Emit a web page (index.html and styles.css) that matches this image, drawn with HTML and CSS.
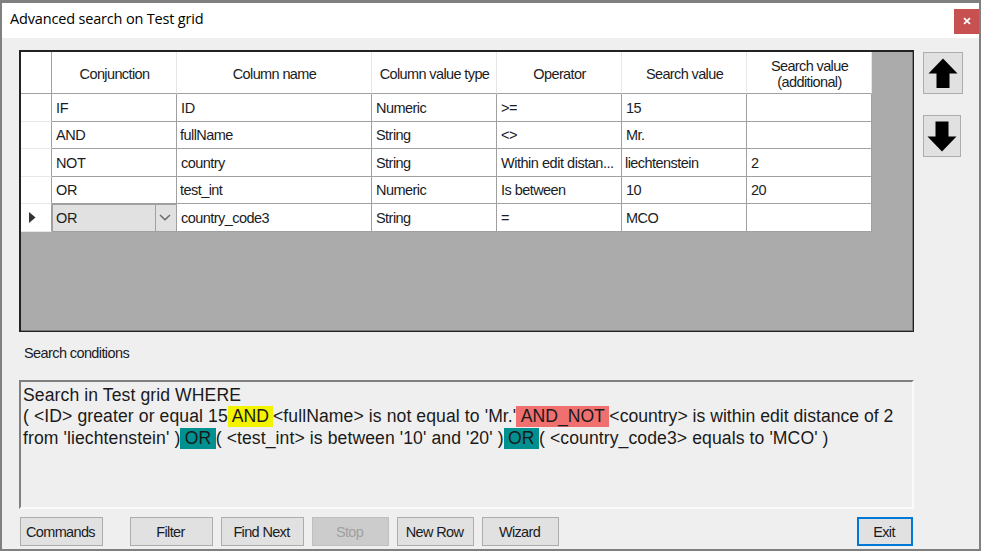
FILE: index.html
```html
<!DOCTYPE html>
<html lang="en">
<head>
<meta charset="utf-8">
<title>Advanced search on Test grid</title>
<link rel="stylesheet" href="styles.css">
</head>
<body>
<div class="window">
  <header class="titlebar">
    <span class="title">Advanced search on Test grid</span>
    <button class="close" aria-label="Close"><svg width="8" height="8" viewBox="0 0 8 8"><path d="M1 1.2L7 6.8M7 1.2L1 6.8" stroke="#fff" stroke-width="1.8"/></svg></button>
  </header>
  <main class="content">
    <section class="top">
      <div class="grid-box">
        <div class="grid">
          <div class="h"></div><div class="h">Conjunction</div><div class="h">Column name</div><div class="h">Column value type</div><div class="h">Operator</div><div class="h">Search value</div><div class="h">Search value<br>(additional)</div>
          <div class="r"></div><div class="c up">IF</div><div class="c up">ID</div><div class="c">Numeric</div><div class="c">&gt;=</div><div class="c">15</div><div class="c"></div>
          <div class="r"></div><div class="c up">AND</div><div class="c name">fullName</div><div class="c">String</div><div class="c">&lt;&gt;</div><div class="c">Mr.</div><div class="c"></div>
          <div class="r"></div><div class="c up">NOT</div><div class="c">country</div><div class="c">String</div><div class="c dots">Within edit distan...</div><div class="c flush">liechtenstein</div><div class="c">2</div>
          <div class="r"></div><div class="c up">OR</div><div class="c name">test_int</div><div class="c">Numeric</div><div class="c">Is between</div><div class="c">10</div><div class="c">20</div>
          <div class="r"><svg width="7" height="11" viewBox="0 0 7 11"><path d="M0 0L6.5 5.5L0 11Z" fill="#333"/></svg></div>
          <div class="c up combo"><span>OR</span><i class="drop"><svg width="12" height="7" viewBox="0 0 12 7"><path d="M1 1L6 5.8L11 1" fill="none" stroke="#666" stroke-width="1.4"/></svg></i></div>
          <div class="c">country_code3</div><div class="c">String</div><div class="c">=</div><div class="c">MCO</div><div class="c"></div>
        </div>
      </div>
      <div class="movers">
        <button class="move up-btn" aria-label="Move up"><svg width="30" height="31" viewBox="0 0 30 31"><path d="M15 0.5L29.5 15.5H21.5V30H8.500V15.500H0.500Z"/></svg></button>
        <button class="move down-btn" aria-label="Move down"><svg width="30" height="31" viewBox="0 0 30 31"><path d="M15 30.500L0.500 15.500H8.500V0.500H21.500V15.500H29.500Z"/></svg></button>
      </div>
    </section>
    <div class="label">Search conditions</div>
    <section class="conditions">
      <p>Search in Test grid WHERE</p>
      <p>( &lt;ID&gt; greater or equal 15<mark class="and">AND</mark>&lt;fullName&gt; is not equal to 'Mr.'<mark class="not">AND_NOT</mark><span class="tail">&lt;country&gt; is within edit distance of 2</span></p>
      <p>from 'liechtenstein' )<mark class="or">OR</mark>( &lt;test_int&gt; is between '10' and '20' )<mark class="or">OR</mark>( &lt;country_code3&gt; equals to 'MCO' )</p>
    </section>
    <footer class="actions">
      <button class="btn commands">Commands</button>
      <button class="btn">Filter</button>
      <button class="btn">Find Next</button>
      <button class="btn small stop" disabled>Stop</button>
      <button class="btn small">New Row</button>
      <button class="btn small">Wizard</button>
      <button class="btn exit">Exit</button>
    </footer>
  </main>
</div>
</body>
</html>
```
FILE: styles.css
```css
* { box-sizing: border-box; }
html, body { margin: 0; height: 100%; overflow: hidden; }
body { font: 14.5px/17px "Liberation Sans", Arial, sans-serif; letter-spacing: -0.55px; color: #1c1c24; }
button { font: inherit; letter-spacing: inherit; color: inherit; padding: 0; margin: 0; border-radius: 0; }
.window { width: 981px; height: 551px; border: 2px solid #808080; border-top-width: 3px; background: #efefef; display: flex; flex-direction: column; }
.titlebar { height: 35px; background: #fff; display: flex; justify-content: space-between; padding-left: 8px; flex: none; }
.title { font: 14.5px/32px "Open Sans", "Noto Sans", sans-serif; letter-spacing: -0.17px; color: #000; }
.close { width: 25px; height: 25px; margin-top: 6px; border: 0; background: #c75050; display: flex; align-items: center; justify-content: center; }
.close svg { margin: -1px 0 0 0; }
.content { flex: 1; display: flex; flex-direction: column; padding: 12px 0 0 17px; }
.top { display: flex; height: 282px; gap: 9px; }
.grid-box { width: 895px; height: 282px; background: #ababab; border: 1px solid #222; border-width: 2px 1px 1px 2px; box-shadow: inset -1px -1px #777; flex: none; }
.grid { display: grid; width: 851px; grid-template-columns: 31px 125px 195px 125px 125px 125px 125px; grid-template-rows: 42px repeat(5, 27.5px); background: #fff; }
.h { display: flex; align-items: center; justify-content: center; text-align: center; border-right: 1px solid #e6e6e6; border-bottom: 1px solid #a0a0a0; padding: 2px 0 0 1px; line-height: 16px; letter-spacing: -0.62px; }
.h:first-child { border-right-color: #a0a0a0; }
.r, .c { border-bottom: 1px solid #a0a0a0; border-right: 1px solid #a0a0a0; display: flex; align-items: center; }
.r { border-bottom-color: #e8e8e8; padding-left: 8px; }
.c { padding-left: 4px; padding-top: 2px; white-space: nowrap; overflow: hidden; }
.flush { padding-left: 3px; }
.name { padding-left: 3px; }
.dots { letter-spacing: -0.47px; }
.up { letter-spacing: -0.4px; }
.combo { background: #e1e1e1; border: 1px solid #a0a0a0; padding: 1px 0 0 3px; justify-content: space-between; }
.drop { width: 21px; align-self: stretch; border-left: 1px solid #a0a0a0; margin-top: -1px; display: flex; align-items: center; justify-content: center; }
.drop svg { margin-right: 2px; }
.movers { display: flex; flex-direction: column; gap: 21px; padding-top: 2px; align-items: flex-start; }
.move { width: 40px; height: 42px; background: #e1e1e1; border: 1px solid #adadad; display: flex; align-items: center; justify-content: center; }
.down-btn { width: 38px; height: 42px; }
.label { margin: 13px 0 0 5px; line-height: 17px; letter-spacing: -0.6px; }
.conditions { margin-top: 18px; width: 895px; height: 129px; border: 2px solid; border-color: #808080 #fafafa #fafafa #808080; padding: 3px 0 0 2px; font-size: 17.6px; line-height: 21.3px; letter-spacing: 0.09px; color: #1a1a1a; white-space: nowrap; }
.conditions p { margin: 0; }
.tail { letter-spacing: 0.01px; }
mark { display: inline-block; height: 21px; line-height: 21px; padding: 0 4.5px; letter-spacing: 0; color: #1a1a1a; vertical-align: top; }
.and { background: #f3f300; padding: 0 4px; }
.not { background: #f07070; }
.or { background: #009090; }
.actions { display: flex; margin: 8px 0 0 1px; gap: 8px; }
.btn { width: 83px; height: 29px; background: #e1e1e1; border: 1px solid #adadad; padding: 1px 2px 0 0; letter-spacing: -0.65px; }
.small { width: 77px; }
.commands { margin-right: 19px; }
.stop { background: #ccc; border-color: #bfbfbf; color: #a0a0a0; }
.exit { width: 56px; border: 2px solid #0078d7; margin-left: 290px; }
```
